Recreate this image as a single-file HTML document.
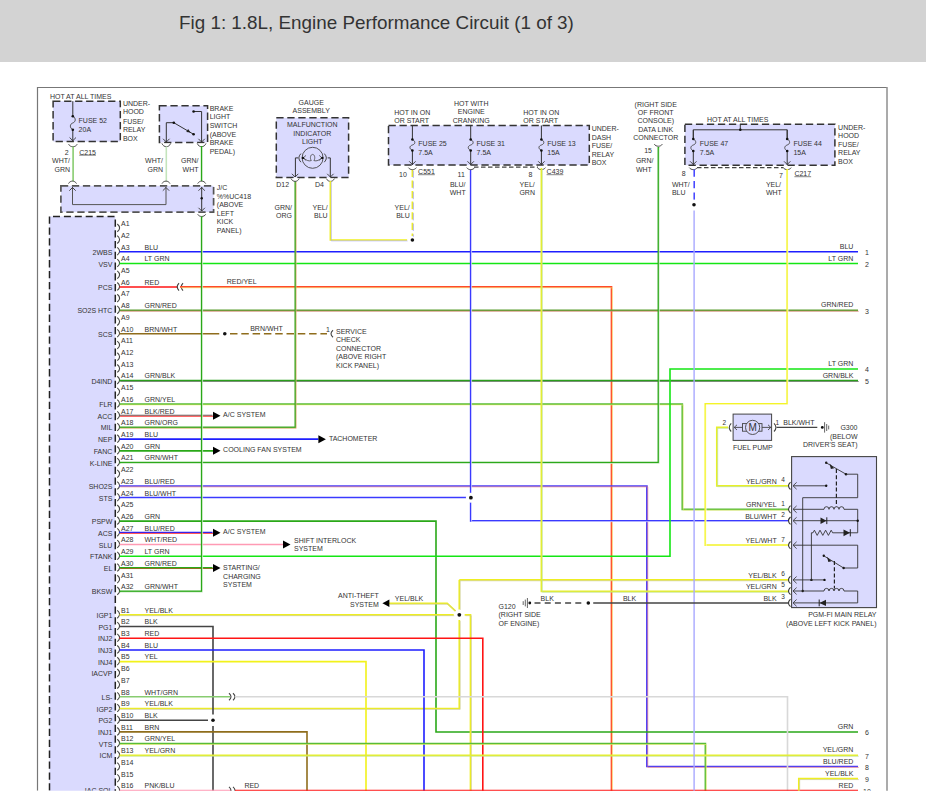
<!DOCTYPE html>
<html><head><meta charset="utf-8"><style>
html,body{margin:0;padding:0;background:#fff;width:926px;height:808px;overflow:hidden}
.hdr{position:absolute;left:0;top:0;width:926px;height:62px;background:#d3d3d3}
.ttl{position:absolute;left:179px;top:8.8px;font-family:"Liberation Sans",sans-serif;font-size:18.85px;color:#333;white-space:nowrap;line-height:28px}
svg{position:absolute;left:0;top:0}
text{font-family:"Liberation Sans",sans-serif}
</style></head><body>
<div class="hdr"></div>
<div class="ttl">Fig 1: 1.8L, Engine Performance Circuit (1 of 3)</div>
<svg width="926" height="808" viewBox="0 0 926 808">
<defs><clipPath id="cp"><rect x="0" y="0" width="926" height="790.8"/></clipPath></defs>
<g clip-path="url(#cp)">

<path d="M37.5,790.8 L37.5,87.5 L887,87.5 L887,790.8" fill="none" stroke="#777" stroke-width="1.2"/>
<line x1="887" y1="87.5" x2="887" y2="790.8" stroke="#aaa" stroke-width="1.6"/>
<text x="49.9" y="98.72" font-size="7" text-anchor="start" fill="#333">HOT AT ALL TIMES</text>
<rect x="53.1" y="101.2" width="67.2" height="40.4" fill="#dadafe" stroke="#333" stroke-width="1.5" stroke-dasharray="7.3,3.7"/>
<line x1="72.8" y1="101.2" x2="72.8" y2="116.2" stroke="#333" stroke-width="1"/>
<path d="M72.8,116.2 C76.3,118.2 75.8,121.95 72.8,122.95 C69.8,123.95 69.3,127.7 72.8,129.7" fill="none" stroke="#444" stroke-width="0.9"/>
<line x1="72.8" y1="129.7" x2="72.8" y2="141.2" stroke="#333" stroke-width="1"/>
<circle cx="72.8" cy="116.2" r="1.3" fill="#111"/>
<circle cx="72.8" cy="129.7" r="1.3" fill="#111"/>
<path d="M69.6,137.5 L72.8,140.7 L76,137.5" fill="none" stroke="#333" stroke-width="0.9"/>
<text x="78.6" y="122.72" font-size="7" text-anchor="start" fill="#333">FUSE 52</text>
<text x="78.6" y="132.22" font-size="7" text-anchor="start" fill="#333">20A</text>
<text x="122.9" y="106.12" font-size="7" text-anchor="start" fill="#333">UNDER-</text>
<text x="122.9" y="113.62" font-size="7" text-anchor="start" fill="#333">HOOD</text>
<text x="122.9" y="123.62" font-size="7" text-anchor="start" fill="#333">FUSE/</text>
<text x="122.9" y="131.82" font-size="7" text-anchor="start" fill="#333">RELAY</text>
<text x="122.9" y="141.42" font-size="7" text-anchor="start" fill="#333">BOX</text>
<path d="M68.6,144.2 C70.32,147.6 75.48,147.6 77.2,144.2" fill="#fff" stroke="#444" stroke-width="0.95"/>
<text x="68.6" y="154.62" font-size="7" text-anchor="end" fill="#333">2</text>
<text x="79.2" y="154.62" font-size="7" text-anchor="start" fill="#333">C215</text>
<line x1="79.2" y1="155.2" x2="95.94" y2="155.2" stroke="#333" stroke-width="0.6"/>
<text x="70" y="163.12" font-size="7" text-anchor="end" fill="#333">WHT/</text>
<text x="70" y="171.72" font-size="7" text-anchor="end" fill="#333">GRN</text>
<rect x="159.4" y="105.8" width="48.2" height="36.6" fill="#dadafe" stroke="#333" stroke-width="1.5" stroke-dasharray="7.3,3.7"/>
<polyline points="166.3,142 166.3,122.7 173.8,122.7" fill="none" stroke="#333" stroke-width="1" stroke-linejoin="miter" stroke-linecap="butt"/>
<polyline points="173.8,122.7 193.6,134.3" fill="none" stroke="#333" stroke-width="1" stroke-linejoin="miter" stroke-linecap="butt"/>
<path d="M190.6,132.5 L186.3,131.9 L188.1,129 Z" fill="#222"/>
<circle cx="173.8" cy="122.7" r="1.3" fill="#111"/>
<circle cx="193.6" cy="134.3" r="1.3" fill="#111"/>
<polyline points="193.6,111.5 201.6,111.5 201.6,142" fill="none" stroke="#333" stroke-width="1" stroke-linejoin="miter" stroke-linecap="butt"/>
<circle cx="193.6" cy="111.5" r="1.3" fill="#111"/>
<path d="M163.1,138.8 L166.3,142 L169.5,138.8" fill="none" stroke="#333" stroke-width="0.9"/>
<path d="M198.4,138.8 L201.6,142 L204.8,138.8" fill="none" stroke="#333" stroke-width="0.9"/>
<text x="209.7" y="110.82" font-size="7" text-anchor="start" fill="#333">BRAKE</text>
<text x="209.7" y="119.42" font-size="7" text-anchor="start" fill="#333">LIGHT</text>
<text x="209.7" y="128.02" font-size="7" text-anchor="start" fill="#333">SWITCH</text>
<text x="209.7" y="136.62" font-size="7" text-anchor="start" fill="#333">(ABOVE</text>
<text x="209.7" y="145.22" font-size="7" text-anchor="start" fill="#333">BRAKE</text>
<text x="209.7" y="153.82" font-size="7" text-anchor="start" fill="#333">PEDAL)</text>
<path d="M161.9,143.4 C163.66,147.8 168.94,147.8 170.7,143.4" fill="#fff" stroke="#444" stroke-width="0.95"/>
<path d="M197.2,143.4 C198.96,147.8 204.24,147.8 206,143.4" fill="#fff" stroke="#444" stroke-width="0.95"/>
<text x="163" y="163.12" font-size="7" text-anchor="end" fill="#333">WHT/</text>
<text x="163" y="171.72" font-size="7" text-anchor="end" fill="#333">GRN</text>
<text x="198.5" y="163.12" font-size="7" text-anchor="end" fill="#333">GRN/</text>
<text x="198.5" y="171.72" font-size="7" text-anchor="end" fill="#333">WHT</text>
<polyline points="73.1,146.5 73.1,181.2" fill="none" stroke="#88cc70" stroke-width="1.6" stroke-linejoin="miter" stroke-linecap="butt"/>
<polyline points="166.3,146.5 166.3,181.2" fill="none" stroke="#c4e4bc" stroke-width="1.6" stroke-linejoin="miter" stroke-linecap="butt"/>
<polyline points="201.7,146 201.7,181.2" fill="none" stroke="#2aa818" stroke-width="1.7000000000000002" stroke-linejoin="miter" stroke-linecap="butt"/>
<polyline points="202.6,146.9 202.6,182.1" fill="none" stroke="#ffffff" stroke-width="0.6" stroke-linejoin="miter" stroke-linecap="butt"/>
<rect x="60.9" y="185.8" width="152.7" height="26.3" fill="#dadafe" stroke="#555" stroke-width="1.7" stroke-dasharray="7.3,3.7"/>
<polyline points="72.5,187 72.5,204.6 166,204.6 166,187" fill="none" stroke="#555" stroke-width="1" stroke-linejoin="miter" stroke-linecap="butt"/>
<path d="M69.3,190.7 L72.5,187.5 L75.7,190.7" fill="none" stroke="#333" stroke-width="0.9"/>
<path d="M162.8,190.7 L166,187.5 L169.2,190.7" fill="none" stroke="#333" stroke-width="0.9"/>
<polyline points="201.7,187 201.7,211" fill="none" stroke="#333" stroke-width="1" stroke-linejoin="miter" stroke-linecap="butt"/>
<path d="M198.5,190.7 L201.7,187.5 L204.9,190.7" fill="none" stroke="#333" stroke-width="0.9"/>
<path d="M198.5,207.8 L201.7,211 L204.9,207.8" fill="none" stroke="#333" stroke-width="0.9"/>
<circle cx="201.7" cy="198.3" r="1.2" fill="#111"/>
<path d="M68.5,183.6 C70.1,180.3 74.9,180.3 76.5,183.6" fill="none" stroke="#444" stroke-width="0.95"/>
<path d="M162,183.6 C163.6,180.3 168.4,180.3 170,183.6" fill="none" stroke="#444" stroke-width="0.95"/>
<path d="M197.7,183.6 C199.3,180.3 204.1,180.3 205.7,183.6" fill="none" stroke="#444" stroke-width="0.95"/>
<path d="M197.7,214.3 C199.3,217.2 204.1,217.2 205.7,214.3" fill="#fff" stroke="#444" stroke-width="0.95"/>
<text x="216.8" y="190.32" font-size="7" text-anchor="start" fill="#333">J/C</text>
<text x="216.8" y="198.82" font-size="7" text-anchor="start" fill="#333">%%UC418</text>
<text x="216.8" y="207.32" font-size="7" text-anchor="start" fill="#333">(ABOVE</text>
<text x="216.8" y="215.82" font-size="7" text-anchor="start" fill="#333">LEFT</text>
<text x="216.8" y="224.32" font-size="7" text-anchor="start" fill="#333">KICK</text>
<text x="216.8" y="232.82" font-size="7" text-anchor="start" fill="#333">PANEL)</text>
<rect x="49.5" y="216.5" width="65.8" height="600" fill="#dadafe"/>
<path d="M49.5,216.5 L115.3,216.5" fill="none" stroke="#222" stroke-width="1.5" stroke-dasharray="7,3.9" stroke-dashoffset="7.4"/>
<path d="M49.5,216.5 L49.5,800" fill="none" stroke="#222" stroke-width="1.5" stroke-dasharray="7.3,3.6"/>
<path d="M115.3,216.5 L115.3,800" fill="none" stroke="#222" stroke-width="1.5" stroke-dasharray="7.2,3.55" stroke-dashoffset="7.65"/>
<path d="M117.3,223.98 Q121.9,227.88 117.3,231.78" fill="none" stroke="#444" stroke-width="1.1"/>
<text x="121" y="226.2" font-size="7" text-anchor="start" fill="#333">A1</text>
<path d="M117.3,235.69 Q121.9,239.59 117.3,243.49" fill="none" stroke="#444" stroke-width="1.1"/>
<text x="121" y="237.91" font-size="7" text-anchor="start" fill="#333">A2</text>
<path d="M117.3,247.4 Q121.9,251.3 117.3,255.2" fill="none" stroke="#444" stroke-width="1.1"/>
<text x="121" y="249.62" font-size="7" text-anchor="start" fill="#333">A3</text>
<text x="112.4" y="254.82" font-size="7" text-anchor="end" fill="#333">2WBS</text>
<text x="144.5" y="249.62" font-size="7" text-anchor="start" fill="#333">BLU</text>
<path d="M117.3,259.11 Q121.9,263.01 117.3,266.91" fill="none" stroke="#444" stroke-width="1.1"/>
<text x="121" y="261.33" font-size="7" text-anchor="start" fill="#333">A4</text>
<text x="112.4" y="266.53" font-size="7" text-anchor="end" fill="#333">VSV</text>
<text x="144.5" y="261.33" font-size="7" text-anchor="start" fill="#333">LT GRN</text>
<path d="M117.3,270.82 Q121.9,274.72 117.3,278.62" fill="none" stroke="#444" stroke-width="1.1"/>
<text x="121" y="273.04" font-size="7" text-anchor="start" fill="#333">A5</text>
<path d="M117.3,282.53 Q121.9,286.43 117.3,290.33" fill="none" stroke="#444" stroke-width="1.1"/>
<text x="121" y="284.75" font-size="7" text-anchor="start" fill="#333">A6</text>
<text x="112.4" y="289.95" font-size="7" text-anchor="end" fill="#333">PCS</text>
<text x="144.5" y="284.75" font-size="7" text-anchor="start" fill="#333">RED</text>
<path d="M117.3,294.24 Q121.9,298.14 117.3,302.04" fill="none" stroke="#444" stroke-width="1.1"/>
<text x="121" y="296.46" font-size="7" text-anchor="start" fill="#333">A7</text>
<path d="M117.3,305.95 Q121.9,309.85 117.3,313.75" fill="none" stroke="#444" stroke-width="1.1"/>
<text x="121" y="308.17" font-size="7" text-anchor="start" fill="#333">A8</text>
<text x="112.4" y="313.37" font-size="7" text-anchor="end" fill="#333">SO2S HTC</text>
<text x="144.5" y="308.17" font-size="7" text-anchor="start" fill="#333">GRN/RED</text>
<path d="M117.3,317.66 Q121.9,321.56 117.3,325.46" fill="none" stroke="#444" stroke-width="1.1"/>
<text x="121" y="319.88" font-size="7" text-anchor="start" fill="#333">A9</text>
<path d="M117.3,329.37 Q121.9,333.27 117.3,337.17" fill="none" stroke="#444" stroke-width="1.1"/>
<text x="121" y="331.59" font-size="7" text-anchor="start" fill="#333">A10</text>
<text x="112.4" y="336.79" font-size="7" text-anchor="end" fill="#333">SCS</text>
<text x="144.5" y="331.59" font-size="7" text-anchor="start" fill="#333">BRN/WHT</text>
<path d="M117.3,341.08 Q121.9,344.98 117.3,348.88" fill="none" stroke="#444" stroke-width="1.1"/>
<text x="121" y="343.3" font-size="7" text-anchor="start" fill="#333">A11</text>
<path d="M117.3,352.79 Q121.9,356.69 117.3,360.59" fill="none" stroke="#444" stroke-width="1.1"/>
<text x="121" y="355.01" font-size="7" text-anchor="start" fill="#333">A12</text>
<path d="M117.3,364.5 Q121.9,368.4 117.3,372.3" fill="none" stroke="#444" stroke-width="1.1"/>
<text x="121" y="366.72" font-size="7" text-anchor="start" fill="#333">A13</text>
<path d="M117.3,376.21 Q121.9,380.11 117.3,384.01" fill="none" stroke="#444" stroke-width="1.1"/>
<text x="121" y="378.43" font-size="7" text-anchor="start" fill="#333">A14</text>
<text x="112.4" y="383.63" font-size="7" text-anchor="end" fill="#333">D4IND</text>
<text x="144.5" y="378.43" font-size="7" text-anchor="start" fill="#333">GRN/BLK</text>
<path d="M117.3,387.92 Q121.9,391.82 117.3,395.72" fill="none" stroke="#444" stroke-width="1.1"/>
<text x="121" y="390.14" font-size="7" text-anchor="start" fill="#333">A15</text>
<path d="M117.3,399.63 Q121.9,403.53 117.3,407.43" fill="none" stroke="#444" stroke-width="1.1"/>
<text x="121" y="401.85" font-size="7" text-anchor="start" fill="#333">A16</text>
<text x="112.4" y="407.05" font-size="7" text-anchor="end" fill="#333">FLR</text>
<text x="144.5" y="401.85" font-size="7" text-anchor="start" fill="#333">GRN/YEL</text>
<path d="M117.3,411.34 Q121.9,415.24 117.3,419.14" fill="none" stroke="#444" stroke-width="1.1"/>
<text x="121" y="413.56" font-size="7" text-anchor="start" fill="#333">A17</text>
<text x="112.4" y="418.76" font-size="7" text-anchor="end" fill="#333">ACC</text>
<text x="144.5" y="413.56" font-size="7" text-anchor="start" fill="#333">BLK/RED</text>
<path d="M117.3,423.05 Q121.9,426.95 117.3,430.85" fill="none" stroke="#444" stroke-width="1.1"/>
<text x="121" y="425.27" font-size="7" text-anchor="start" fill="#333">A18</text>
<text x="112.4" y="430.47" font-size="7" text-anchor="end" fill="#333">MIL</text>
<text x="144.5" y="425.27" font-size="7" text-anchor="start" fill="#333">GRN/ORG</text>
<path d="M117.3,434.76 Q121.9,438.66 117.3,442.56" fill="none" stroke="#444" stroke-width="1.1"/>
<text x="121" y="436.98" font-size="7" text-anchor="start" fill="#333">A19</text>
<text x="112.4" y="442.18" font-size="7" text-anchor="end" fill="#333">NEP</text>
<text x="144.5" y="436.98" font-size="7" text-anchor="start" fill="#333">BLU</text>
<path d="M117.3,446.47 Q121.9,450.37 117.3,454.27" fill="none" stroke="#444" stroke-width="1.1"/>
<text x="121" y="448.69" font-size="7" text-anchor="start" fill="#333">A20</text>
<text x="112.4" y="453.89" font-size="7" text-anchor="end" fill="#333">FANC</text>
<text x="144.5" y="448.69" font-size="7" text-anchor="start" fill="#333">GRN</text>
<path d="M117.3,458.18 Q121.9,462.08 117.3,465.98" fill="none" stroke="#444" stroke-width="1.1"/>
<text x="121" y="460.4" font-size="7" text-anchor="start" fill="#333">A21</text>
<text x="112.4" y="465.6" font-size="7" text-anchor="end" fill="#333">K-LINE</text>
<text x="144.5" y="460.4" font-size="7" text-anchor="start" fill="#333">GRN/WHT</text>
<path d="M117.3,469.89 Q121.9,473.79 117.3,477.69" fill="none" stroke="#444" stroke-width="1.1"/>
<text x="121" y="472.11" font-size="7" text-anchor="start" fill="#333">A22</text>
<path d="M117.3,481.6 Q121.9,485.5 117.3,489.4" fill="none" stroke="#444" stroke-width="1.1"/>
<text x="121" y="483.82" font-size="7" text-anchor="start" fill="#333">A23</text>
<text x="112.4" y="489.02" font-size="7" text-anchor="end" fill="#333">SHO2S</text>
<text x="144.5" y="483.82" font-size="7" text-anchor="start" fill="#333">BLU/RED</text>
<path d="M117.3,493.31 Q121.9,497.21 117.3,501.11" fill="none" stroke="#444" stroke-width="1.1"/>
<text x="121" y="495.53" font-size="7" text-anchor="start" fill="#333">A24</text>
<text x="112.4" y="500.73" font-size="7" text-anchor="end" fill="#333">STS</text>
<text x="144.5" y="495.53" font-size="7" text-anchor="start" fill="#333">BLU/WHT</text>
<path d="M117.3,505.02 Q121.9,508.92 117.3,512.82" fill="none" stroke="#444" stroke-width="1.1"/>
<text x="121" y="507.24" font-size="7" text-anchor="start" fill="#333">A25</text>
<path d="M117.3,516.73 Q121.9,520.63 117.3,524.53" fill="none" stroke="#444" stroke-width="1.1"/>
<text x="121" y="518.95" font-size="7" text-anchor="start" fill="#333">A26</text>
<text x="112.4" y="524.15" font-size="7" text-anchor="end" fill="#333">PSPW</text>
<text x="144.5" y="518.95" font-size="7" text-anchor="start" fill="#333">GRN</text>
<path d="M117.3,528.44 Q121.9,532.34 117.3,536.24" fill="none" stroke="#444" stroke-width="1.1"/>
<text x="121" y="530.66" font-size="7" text-anchor="start" fill="#333">A27</text>
<text x="112.4" y="535.86" font-size="7" text-anchor="end" fill="#333">ACS</text>
<text x="144.5" y="530.66" font-size="7" text-anchor="start" fill="#333">BLU/RED</text>
<path d="M117.3,540.15 Q121.9,544.05 117.3,547.95" fill="none" stroke="#444" stroke-width="1.1"/>
<text x="121" y="542.37" font-size="7" text-anchor="start" fill="#333">A28</text>
<text x="112.4" y="547.57" font-size="7" text-anchor="end" fill="#333">SLU</text>
<text x="144.5" y="542.37" font-size="7" text-anchor="start" fill="#333">WHT/RED</text>
<path d="M117.3,551.86 Q121.9,555.76 117.3,559.66" fill="none" stroke="#444" stroke-width="1.1"/>
<text x="121" y="554.08" font-size="7" text-anchor="start" fill="#333">A29</text>
<text x="112.4" y="559.28" font-size="7" text-anchor="end" fill="#333">FTANK</text>
<text x="144.5" y="554.08" font-size="7" text-anchor="start" fill="#333">LT GRN</text>
<path d="M117.3,563.57 Q121.9,567.47 117.3,571.37" fill="none" stroke="#444" stroke-width="1.1"/>
<text x="121" y="565.79" font-size="7" text-anchor="start" fill="#333">A30</text>
<text x="112.4" y="570.99" font-size="7" text-anchor="end" fill="#333">EL</text>
<text x="144.5" y="565.79" font-size="7" text-anchor="start" fill="#333">GRN/RED</text>
<path d="M117.3,575.28 Q121.9,579.18 117.3,583.08" fill="none" stroke="#444" stroke-width="1.1"/>
<text x="121" y="577.5" font-size="7" text-anchor="start" fill="#333">A31</text>
<path d="M117.3,586.99 Q121.9,590.89 117.3,594.79" fill="none" stroke="#444" stroke-width="1.1"/>
<text x="121" y="589.21" font-size="7" text-anchor="start" fill="#333">A32</text>
<text x="112.4" y="594.41" font-size="7" text-anchor="end" fill="#333">BKSW</text>
<text x="144.5" y="589.21" font-size="7" text-anchor="start" fill="#333">GRN/WHT</text>
<path d="M117.3,610.41 Q121.9,614.31 117.3,618.21" fill="none" stroke="#444" stroke-width="1.1"/>
<text x="121" y="612.63" font-size="7" text-anchor="start" fill="#333">B1</text>
<text x="112.4" y="617.83" font-size="7" text-anchor="end" fill="#333">IGP1</text>
<text x="144.5" y="612.63" font-size="7" text-anchor="start" fill="#333">YEL/BLK</text>
<path d="M117.3,622.12 Q121.9,626.02 117.3,629.92" fill="none" stroke="#444" stroke-width="1.1"/>
<text x="121" y="624.34" font-size="7" text-anchor="start" fill="#333">B2</text>
<text x="112.4" y="629.54" font-size="7" text-anchor="end" fill="#333">PG1</text>
<text x="144.5" y="624.34" font-size="7" text-anchor="start" fill="#333">BLK</text>
<path d="M117.3,633.83 Q121.9,637.73 117.3,641.63" fill="none" stroke="#444" stroke-width="1.1"/>
<text x="121" y="636.05" font-size="7" text-anchor="start" fill="#333">B3</text>
<text x="112.4" y="641.25" font-size="7" text-anchor="end" fill="#333">INJ2</text>
<text x="144.5" y="636.05" font-size="7" text-anchor="start" fill="#333">RED</text>
<path d="M117.3,645.54 Q121.9,649.44 117.3,653.34" fill="none" stroke="#444" stroke-width="1.1"/>
<text x="121" y="647.76" font-size="7" text-anchor="start" fill="#333">B4</text>
<text x="112.4" y="652.96" font-size="7" text-anchor="end" fill="#333">INJ3</text>
<text x="144.5" y="647.76" font-size="7" text-anchor="start" fill="#333">BLU</text>
<path d="M117.3,657.25 Q121.9,661.15 117.3,665.05" fill="none" stroke="#444" stroke-width="1.1"/>
<text x="121" y="659.47" font-size="7" text-anchor="start" fill="#333">B5</text>
<text x="112.4" y="664.67" font-size="7" text-anchor="end" fill="#333">INJ4</text>
<text x="144.5" y="659.47" font-size="7" text-anchor="start" fill="#333">YEL</text>
<path d="M117.3,668.96 Q121.9,672.86 117.3,676.76" fill="none" stroke="#444" stroke-width="1.1"/>
<text x="121" y="671.18" font-size="7" text-anchor="start" fill="#333">B6</text>
<text x="112.4" y="676.38" font-size="7" text-anchor="end" fill="#333">IACVP</text>
<path d="M117.3,680.67 Q121.9,684.57 117.3,688.47" fill="none" stroke="#444" stroke-width="1.1"/>
<text x="121" y="682.89" font-size="7" text-anchor="start" fill="#333">B7</text>
<path d="M117.3,692.38 Q121.9,696.28 117.3,700.18" fill="none" stroke="#444" stroke-width="1.1"/>
<text x="121" y="694.6" font-size="7" text-anchor="start" fill="#333">B8</text>
<text x="112.4" y="699.8" font-size="7" text-anchor="end" fill="#333">LS-</text>
<text x="144.5" y="694.6" font-size="7" text-anchor="start" fill="#333">WHT/GRN</text>
<path d="M117.3,704.09 Q121.9,707.99 117.3,711.89" fill="none" stroke="#444" stroke-width="1.1"/>
<text x="121" y="706.31" font-size="7" text-anchor="start" fill="#333">B9</text>
<text x="112.4" y="711.51" font-size="7" text-anchor="end" fill="#333">IGP2</text>
<text x="144.5" y="706.31" font-size="7" text-anchor="start" fill="#333">YEL/BLK</text>
<path d="M117.3,715.8 Q121.9,719.7 117.3,723.6" fill="none" stroke="#444" stroke-width="1.1"/>
<text x="121" y="718.02" font-size="7" text-anchor="start" fill="#333">B10</text>
<text x="112.4" y="723.22" font-size="7" text-anchor="end" fill="#333">PG2</text>
<text x="144.5" y="718.02" font-size="7" text-anchor="start" fill="#333">BLK</text>
<path d="M117.3,727.51 Q121.9,731.41 117.3,735.31" fill="none" stroke="#444" stroke-width="1.1"/>
<text x="121" y="729.73" font-size="7" text-anchor="start" fill="#333">B11</text>
<text x="112.4" y="734.93" font-size="7" text-anchor="end" fill="#333">INJ1</text>
<text x="144.5" y="729.73" font-size="7" text-anchor="start" fill="#333">BRN</text>
<path d="M117.3,739.22 Q121.9,743.12 117.3,747.02" fill="none" stroke="#444" stroke-width="1.1"/>
<text x="121" y="741.44" font-size="7" text-anchor="start" fill="#333">B12</text>
<text x="112.4" y="746.64" font-size="7" text-anchor="end" fill="#333">VTS</text>
<text x="144.5" y="741.44" font-size="7" text-anchor="start" fill="#333">GRN/YEL</text>
<path d="M117.3,750.93 Q121.9,754.83 117.3,758.73" fill="none" stroke="#444" stroke-width="1.1"/>
<text x="121" y="753.15" font-size="7" text-anchor="start" fill="#333">B13</text>
<text x="112.4" y="758.35" font-size="7" text-anchor="end" fill="#333">ICM</text>
<text x="144.5" y="753.15" font-size="7" text-anchor="start" fill="#333">YEL/GRN</text>
<path d="M117.3,762.64 Q121.9,766.54 117.3,770.44" fill="none" stroke="#444" stroke-width="1.1"/>
<text x="121" y="764.86" font-size="7" text-anchor="start" fill="#333">B14</text>
<path d="M117.3,774.35 Q121.9,778.25 117.3,782.15" fill="none" stroke="#444" stroke-width="1.1"/>
<text x="121" y="776.57" font-size="7" text-anchor="start" fill="#333">B15</text>
<path d="M117.3,786.06 Q121.9,789.96 117.3,793.86" fill="none" stroke="#444" stroke-width="1.1"/>
<text x="121" y="788.28" font-size="7" text-anchor="start" fill="#333">B16</text>
<text x="112.4" y="793.48" font-size="7" text-anchor="end" fill="#333">IAC SOL</text>
<text x="144.5" y="788.28" font-size="7" text-anchor="start" fill="#333">PNK/BLU</text>
<polyline points="119.5,251.8 858,251.8" fill="none" stroke="#1e1eff" stroke-width="1.6" stroke-linejoin="miter" stroke-linecap="butt"/>
<polyline points="119.5,263.51 858,263.51" fill="none" stroke="#14e614" stroke-width="1.6" stroke-linejoin="miter" stroke-linecap="butt"/>
<polyline points="119.5,286.93 177.5,286.93" fill="none" stroke="#ff1414" stroke-width="1.6" stroke-linejoin="miter" stroke-linecap="butt"/>
<path d="M179,283.23 Q175.5,286.93 179,290.63 M183,283.23 Q179.5,286.93 183,290.63" fill="none" stroke="#444" stroke-width="1.1"/>
<polyline points="180,286.93 611.5,286.93 611.5,800" fill="none" stroke="#ff4a2a" stroke-width="1.7000000000000002" stroke-linejoin="miter" stroke-linecap="butt"/>
<polyline points="180.9,287.83 612.4,287.83 612.4,800.9" fill="none" stroke="#f4f070" stroke-width="0.6" stroke-linejoin="miter" stroke-linecap="butt"/>
<text x="226.7" y="283.95" font-size="7" text-anchor="start" fill="#333">RED/YEL</text>
<polyline points="119.5,310.35 858,310.35" fill="none" stroke="#5a9e30" stroke-width="1.7000000000000002" stroke-linejoin="miter" stroke-linecap="butt"/>
<polyline points="120.4,311.25 858.9,311.25" fill="none" stroke="#f07878" stroke-width="0.6" stroke-linejoin="miter" stroke-linecap="butt"/>
<polyline points="119.5,333.77 219.3,333.77" fill="none" stroke="#8f6d1c" stroke-width="1.6" stroke-linejoin="miter" stroke-linecap="butt"/>
<circle cx="224.8" cy="333.77" r="5" fill="#fff"/>
<circle cx="224.8" cy="333.77" r="1.8" fill="#111"/>
<polyline points="230,333.77 327,333.77" fill="none" stroke="#8f6d1c" stroke-width="1.6" stroke-linejoin="miter" stroke-linecap="butt" stroke-dasharray="7.5,3.8"/>
<text x="250.2" y="330.79" font-size="7" text-anchor="start" fill="#333">BRN/WHT</text>
<text x="326" y="332.09" font-size="7" text-anchor="start" fill="#333">1</text>
<path d="M333,330.27 Q329,333.77 333,337.27" fill="none" stroke="#444" stroke-width="1.1"/>
<text x="336" y="334.12" font-size="7" text-anchor="start" fill="#333">SERVICE</text>
<text x="336" y="342.12" font-size="7" text-anchor="start" fill="#333">CHECK</text>
<text x="336" y="350.92" font-size="7" text-anchor="start" fill="#333">CONNECTOR</text>
<text x="336" y="359.12" font-size="7" text-anchor="start" fill="#333">(ABOVE RIGHT</text>
<text x="336" y="368.02" font-size="7" text-anchor="start" fill="#333">KICK PANEL)</text>
<polyline points="119.5,380.61 858,380.61" fill="none" stroke="#2a9e1c" stroke-width="1.7000000000000002" stroke-linejoin="miter" stroke-linecap="butt"/>
<polyline points="120.4,381.51 858.9,381.51" fill="none" stroke="#666666" stroke-width="0.6" stroke-linejoin="miter" stroke-linecap="butt"/>
<polyline points="119.5,404.03 682.3,404.03 682.3,509.3 788,509.3" fill="none" stroke="#58bc38" stroke-width="1.7000000000000002" stroke-linejoin="miter" stroke-linecap="butt"/>
<polyline points="120.4,404.93 683.2,404.93 683.2,510.2 788.9,510.2" fill="none" stroke="#f4f070" stroke-width="0.6" stroke-linejoin="miter" stroke-linecap="butt"/>
<polyline points="119.05,415.29 212.55,415.29" fill="none" stroke="#555555" stroke-width="1.1" stroke-linejoin="miter" stroke-linecap="butt"/>
<polyline points="120.05,416.29 213.55,416.29" fill="none" stroke="#ff4040" stroke-width="1.0" stroke-linejoin="miter" stroke-linecap="butt"/>
<path d="M213,411.74 L220.5,415.74 L213,419.74 Z" fill="#000"/>
<text x="223.1" y="416.96" font-size="7" text-anchor="start" fill="#333">A/C SYSTEM</text>
<polyline points="119.5,427.45 295.3,427.45 295.3,181" fill="none" stroke="#40aa28" stroke-width="1.7000000000000002" stroke-linejoin="miter" stroke-linecap="butt"/>
<polyline points="120.4,428.35 296.2,428.35 296.2,181.9" fill="none" stroke="#ffb080" stroke-width="0.6" stroke-linejoin="miter" stroke-linecap="butt"/>
<polyline points="119.5,439.16 318.4,439.16" fill="none" stroke="#1e1eff" stroke-width="1.6" stroke-linejoin="miter" stroke-linecap="butt"/>
<path d="M318.4,435.16 L325.9,439.16 L318.4,443.16 Z" fill="#000"/>
<text x="328.9" y="441.08" font-size="7" text-anchor="start" fill="#333">TACHOMETER</text>
<polyline points="119.5,450.87 213,450.87" fill="none" stroke="#2aa818" stroke-width="1.6" stroke-linejoin="miter" stroke-linecap="butt"/>
<path d="M213,446.87 L220.5,450.87 L213,454.87 Z" fill="#000"/>
<text x="223.1" y="451.79" font-size="7" text-anchor="start" fill="#333">COOLING FAN SYSTEM</text>
<polyline points="119.5,462.58 658.4,462.58 658.4,147" fill="none" stroke="#2aa818" stroke-width="1.7000000000000002" stroke-linejoin="miter" stroke-linecap="butt"/>
<polyline points="120.4,463.48 659.3,463.48 659.3,147.9" fill="none" stroke="#ffffff" stroke-width="0.6" stroke-linejoin="miter" stroke-linecap="butt"/>
<polyline points="119.5,486 646.9,486 646.9,766.5 858,766.5" fill="none" stroke="#4a3cf6" stroke-width="1.7000000000000002" stroke-linejoin="miter" stroke-linecap="butt"/>
<polyline points="120.4,486.9 647.8,486.9 647.8,767.4 858.9,767.4" fill="none" stroke="#f07878" stroke-width="0.6" stroke-linejoin="miter" stroke-linecap="butt"/>
<polyline points="470.7,168 470.7,520.8 788,520.8" fill="none" stroke="#3a3aff" stroke-width="1.7000000000000002" stroke-linejoin="miter" stroke-linecap="butt"/>
<polyline points="471.6,168.9 471.6,521.7 788.9,521.7" fill="none" stroke="#ffffff" stroke-width="0.6" stroke-linejoin="miter" stroke-linecap="butt"/>
<polyline points="119.5,497.71 470.7,497.71" fill="none" stroke="#3a3aff" stroke-width="1.7000000000000002" stroke-linejoin="miter" stroke-linecap="butt"/>
<polyline points="120.4,498.61 471.6,498.61" fill="none" stroke="#ffffff" stroke-width="0.6" stroke-linejoin="miter" stroke-linecap="butt"/>
<circle cx="470.9" cy="497.71" r="5" fill="#fff"/>
<circle cx="470.9" cy="497.71" r="1.9" fill="#111"/>
<polyline points="119.5,521.13 436,521.13 436,732 858,732" fill="none" stroke="#2aa818" stroke-width="1.6" stroke-linejoin="miter" stroke-linecap="butt"/>
<polyline points="119.05,532.39 212.55,532.39" fill="none" stroke="#1e1eff" stroke-width="1.1" stroke-linejoin="miter" stroke-linecap="butt"/>
<polyline points="120.05,533.39 213.55,533.39" fill="none" stroke="#ff4040" stroke-width="1.0" stroke-linejoin="miter" stroke-linecap="butt"/>
<path d="M213,528.84 L220.5,532.84 L213,536.84 Z" fill="#000"/>
<text x="223.1" y="534.06" font-size="7" text-anchor="start" fill="#333">A/C SYSTEM</text>
<polyline points="119.5,544.55 283,544.55" fill="none" stroke="#ff9ab4" stroke-width="1.6" stroke-linejoin="miter" stroke-linecap="butt"/>
<path d="M283,540.55 L290.5,544.55 L283,548.55 Z" fill="#000"/>
<text x="294" y="542.87" font-size="7" text-anchor="start" fill="#333">SHIFT INTERLOCK</text>
<text x="294" y="551.27" font-size="7" text-anchor="start" fill="#333">SYSTEM</text>
<polyline points="119.5,556.26 670,556.26 670,369 858,369" fill="none" stroke="#14e614" stroke-width="1.6" stroke-linejoin="miter" stroke-linecap="butt"/>
<polyline points="119.05,567.52 212.55,567.52" fill="none" stroke="#2aa818" stroke-width="1.1" stroke-linejoin="miter" stroke-linecap="butt"/>
<polyline points="120.05,568.52 213.55,568.52" fill="none" stroke="#8f6d1c" stroke-width="1.0" stroke-linejoin="miter" stroke-linecap="butt"/>
<path d="M213,563.97 L220.5,567.97 L213,571.97 Z" fill="#000"/>
<text x="223.1" y="570.09" font-size="7" text-anchor="start" fill="#333">STARTING/</text>
<text x="223.1" y="578.69" font-size="7" text-anchor="start" fill="#333">CHARGING</text>
<text x="223.1" y="587.29" font-size="7" text-anchor="start" fill="#333">SYSTEM</text>
<polyline points="119.5,591.39 201.7,591.39 201.7,216.6" fill="none" stroke="#2aa818" stroke-width="1.7000000000000002" stroke-linejoin="miter" stroke-linecap="butt"/>
<polyline points="120.4,592.29 202.6,592.29 202.6,217.5" fill="none" stroke="#ffffff" stroke-width="0.6" stroke-linejoin="miter" stroke-linecap="butt"/>
<polyline points="119.5,614.81 453.7,614.81" fill="none" stroke="#eeee22" stroke-width="1.7000000000000002" stroke-linejoin="miter" stroke-linecap="butt"/>
<polyline points="120.4,615.71 454.6,615.71" fill="none" stroke="#c4c49c" stroke-width="0.6" stroke-linejoin="miter" stroke-linecap="butt"/>
<polyline points="459.3,579.9 459.3,609.6" fill="none" stroke="#eeee22" stroke-width="1.7000000000000002" stroke-linejoin="miter" stroke-linecap="butt"/>
<polyline points="460.2,580.8 460.2,610.5" fill="none" stroke="#c4c49c" stroke-width="0.6" stroke-linejoin="miter" stroke-linecap="butt"/>
<polyline points="459.3,579.9 788,579.9" fill="none" stroke="#eeee22" stroke-width="1.7000000000000002" stroke-linejoin="miter" stroke-linecap="butt"/>
<polyline points="460.2,580.8 788.9,580.8" fill="none" stroke="#c4c49c" stroke-width="0.6" stroke-linejoin="miter" stroke-linecap="butt"/>
<polyline points="459.3,620 459.3,708.49 119.5,708.49" fill="none" stroke="#eeee22" stroke-width="1.7000000000000002" stroke-linejoin="miter" stroke-linecap="butt"/>
<polyline points="460.2,620.9 460.2,709.39 120.4,709.39" fill="none" stroke="#c4c49c" stroke-width="0.6" stroke-linejoin="miter" stroke-linecap="butt"/>
<polyline points="464.6,614.81 470.5,614.81 470.5,800" fill="none" stroke="#eeee22" stroke-width="1.7000000000000002" stroke-linejoin="miter" stroke-linecap="butt"/>
<polyline points="465.5,615.71 471.4,615.71 471.4,800.9" fill="none" stroke="#c4c49c" stroke-width="0.6" stroke-linejoin="miter" stroke-linecap="butt"/>
<polyline points="389,603.3 447.2,603.3 455.6,611.1" fill="none" stroke="#eeee22" stroke-width="1.7000000000000002" stroke-linejoin="miter" stroke-linecap="butt"/>
<polyline points="389.9,604.2 448.1,604.2 456.5,612" fill="none" stroke="#c4c49c" stroke-width="0.6" stroke-linejoin="miter" stroke-linecap="butt"/>
<circle cx="459.3" cy="614.81" r="5" fill="#fff"/>
<circle cx="459.3" cy="614.81" r="1.9" fill="#111"/>
<path d="M389.4,599.5 L382.4,603.3 L389.4,607.1 Z" fill="#000"/>
<text x="378.8" y="597.62" font-size="7" text-anchor="end" fill="#333">ANTI-THEFT</text>
<text x="378.8" y="606.72" font-size="7" text-anchor="end" fill="#333">SYSTEM</text>
<text x="394.8" y="600.62" font-size="7" text-anchor="start" fill="#333">YEL/BLK</text>
<polyline points="119.5,626.52 213,626.52 213,714.5" fill="none" stroke="#444444" stroke-width="1.6" stroke-linejoin="miter" stroke-linecap="butt"/>
<polyline points="213,726 213,800" fill="none" stroke="#444444" stroke-width="1.6" stroke-linejoin="miter" stroke-linecap="butt"/>
<polyline points="119.5,720.2 208,720.2" fill="none" stroke="#444444" stroke-width="1.6" stroke-linejoin="miter" stroke-linecap="butt"/>
<circle cx="213" cy="720.2" r="5" fill="#fff"/>
<circle cx="213" cy="720.2" r="1.8" fill="#111"/>
<polyline points="119.5,638.23 482.8,638.23 482.8,800" fill="none" stroke="#ff1414" stroke-width="1.6" stroke-linejoin="miter" stroke-linecap="butt"/>
<polyline points="119.5,649.94 424,649.94 424,800" fill="none" stroke="#1e1eff" stroke-width="1.6" stroke-linejoin="miter" stroke-linecap="butt"/>
<polyline points="119.5,661.65 366,661.65 366,800" fill="none" stroke="#f2f21a" stroke-width="1.6" stroke-linejoin="miter" stroke-linecap="butt"/>
<polyline points="119.5,696.78 230,696.78" fill="none" stroke="#88cc70" stroke-width="1.6" stroke-linejoin="miter" stroke-linecap="butt"/>
<path d="M229,693.28 Q233,696.78 229,700.28 M233,693.28 Q237,696.78 233,700.28" fill="none" stroke="#444" stroke-width="1.1"/>
<polyline points="235,696.78 787.5,696.78 787.5,800" fill="none" stroke="#d8d8d8" stroke-width="1.6" stroke-linejoin="miter" stroke-linecap="butt"/>
<polyline points="119.5,731.91 307,731.91 307,800" fill="none" stroke="#8f6d1c" stroke-width="1.6" stroke-linejoin="miter" stroke-linecap="butt"/>
<polyline points="119.5,743.62 705.4,743.62 705.4,800" fill="none" stroke="#58bc38" stroke-width="1.7000000000000002" stroke-linejoin="miter" stroke-linecap="butt"/>
<polyline points="120.4,744.52 706.3,744.52 706.3,800.9" fill="none" stroke="#f4f070" stroke-width="0.6" stroke-linejoin="miter" stroke-linecap="butt"/>
<polyline points="119.5,755.33 858,755.33" fill="none" stroke="#e8f028" stroke-width="1.7000000000000002" stroke-linejoin="miter" stroke-linecap="butt"/>
<polyline points="120.4,756.23 858.9,756.23" fill="none" stroke="#b4dca0" stroke-width="0.6" stroke-linejoin="miter" stroke-linecap="butt"/>
<polyline points="119.5,790.46 231,790.46" fill="none" stroke="#ff9ab4" stroke-width="1.6" stroke-linejoin="miter" stroke-linecap="butt"/>
<path d="M229,786.96 Q233,790.46 229,793.96 M233,786.96 Q237,790.46 233,793.96" fill="none" stroke="#444" stroke-width="1.1"/>
<polyline points="235,790.46 858,790.46" fill="none" stroke="#ff1414" stroke-width="1.6" stroke-linejoin="miter" stroke-linecap="butt"/>
<text x="244.4" y="787.82" font-size="7" text-anchor="start" fill="#333">RED</text>
<text x="311.2" y="104.82" font-size="7" text-anchor="middle" fill="#333">GAUGE</text>
<text x="311.2" y="113.02" font-size="7" text-anchor="middle" fill="#333">ASSEMBLY</text>
<rect x="276.3" y="117.8" width="72.3" height="59.7" fill="#dadafe" stroke="#333" stroke-width="1.5" stroke-dasharray="7.3,3.7"/>
<text x="312.3" y="127.02" font-size="7" text-anchor="middle" fill="#333">MALFUNCTION</text>
<text x="312.3" y="135.62" font-size="7" text-anchor="middle" fill="#333">INDICATOR</text>
<text x="312.3" y="144.22" font-size="7" text-anchor="middle" fill="#333">LIGHT</text>
<circle cx="312.6" cy="157.8" r="10.5" fill="none" stroke="#444" stroke-width="0.9"/>
<polyline points="295.4,177 295.4,157.9 298.2,157.9" fill="none" stroke="#333" stroke-width="1" stroke-linejoin="miter" stroke-linecap="butt"/>
<polyline points="330.3,177 330.3,157.9 327.7,157.9" fill="none" stroke="#333" stroke-width="1" stroke-linejoin="miter" stroke-linecap="butt"/>
<path d="M300.9,153.6 Q296.8,157.9 300.9,162.2 M324.3,153.6 Q328.4,157.9 324.3,162.2" fill="none" stroke="#444" stroke-width="1"/>
<path d="M306,155.4 L303.3,157.9 L306,160.4 M319.2,155.4 L321.9,157.9 L319.2,160.4" fill="none" stroke="#444" stroke-width="0.8"/>
<path d="M303.5,158 C306,160 308.5,161.6 311.3,160.6 C309.6,158 310.6,154.4 312.6,154.4 C314.6,154.4 315.6,158 313.9,160.6 C316.7,161.6 319.2,160 321.7,158" fill="none" stroke="#444" stroke-width="0.8"/>
<circle cx="302.9" cy="157.9" r="1.2" fill="#111"/>
<circle cx="322.3" cy="157.9" r="1.2" fill="#111"/>
<path d="M291.9,173.8 L295.1,177 L298.3,173.8" fill="none" stroke="#333" stroke-width="0.9"/>
<path d="M327.2,173.8 L330.4,177 L333.6,173.8" fill="none" stroke="#333" stroke-width="0.9"/>
<path d="M291.1,178.6 C292.7,182.3 297.5,182.3 299.1,178.6" fill="#fff" stroke="#444" stroke-width="0.95"/>
<path d="M326.4,178.6 C328,182.3 332.8,182.3 334.4,178.6" fill="#fff" stroke="#444" stroke-width="0.95"/>
<text x="276.2" y="186.82" font-size="7" text-anchor="start" fill="#333">D12</text>
<text x="315" y="186.82" font-size="7" text-anchor="start" fill="#333">D4</text>
<text x="292" y="209.72" font-size="7" text-anchor="end" fill="#333">GRN/</text>
<text x="292" y="217.52" font-size="7" text-anchor="end" fill="#333">ORG</text>
<polyline points="330.4,181 330.4,240 407.3,240" fill="none" stroke="#f0f020" stroke-width="1.7000000000000002" stroke-linejoin="miter" stroke-linecap="butt"/>
<polyline points="331.3,181.9 331.3,240.9 408.2,240.9" fill="none" stroke="#a0a0ff" stroke-width="0.6" stroke-linejoin="miter" stroke-linecap="butt"/>
<text x="327.7" y="209.72" font-size="7" text-anchor="end" fill="#333">YEL/</text>
<text x="327.7" y="217.52" font-size="7" text-anchor="end" fill="#333">BLU</text>
<circle cx="412.4" cy="240" r="5" fill="#fff"/>
<circle cx="412.4" cy="240" r="1.8" fill="#111"/>
<polyline points="412.4,169.8 412.4,236" fill="none" stroke="#f0f020" stroke-width="1.7000000000000002" stroke-linejoin="miter" stroke-linecap="butt" stroke-dasharray="7.3,3.3"/>
<polyline points="413.3,170.7 413.3,236.9" fill="none" stroke="#8080ff" stroke-width="0.6" stroke-linejoin="miter" stroke-linecap="butt" stroke-dasharray="7.3,3.3"/>
<text x="409.8" y="209.72" font-size="7" text-anchor="end" fill="#333">YEL/</text>
<text x="409.8" y="217.52" font-size="7" text-anchor="end" fill="#333">BLU</text>
<text x="394.2" y="115.02" font-size="7" text-anchor="start" fill="#333">HOT IN ON</text>
<text x="394.2" y="122.82" font-size="7" text-anchor="start" fill="#333">OR START</text>
<text x="471.2" y="105.52" font-size="7" text-anchor="middle" fill="#333">HOT WITH</text>
<text x="471.2" y="114.17" font-size="7" text-anchor="middle" fill="#333">ENGINE</text>
<text x="471.2" y="122.82" font-size="7" text-anchor="middle" fill="#333">CRANKING</text>
<text x="523.3" y="115.02" font-size="7" text-anchor="start" fill="#333">HOT IN ON</text>
<text x="523.3" y="122.82" font-size="7" text-anchor="start" fill="#333">OR START</text>
<rect x="388.5" y="125.5" width="200.8" height="39.6" fill="#dadafe" stroke="#333" stroke-width="1.5" stroke-dasharray="7.3,3.7"/>
<line x1="412.4" y1="125.5" x2="412.4" y2="139.5" stroke="#333" stroke-width="1"/>
<path d="M412.4,139.5 C415.9,141.5 415.4,144 412.4,145 C409.4,146 408.9,148.5 412.4,150.5" fill="none" stroke="#444" stroke-width="0.9"/>
<line x1="412.4" y1="150.5" x2="412.4" y2="165" stroke="#333" stroke-width="1"/>
<circle cx="412.4" cy="139.5" r="1.3" fill="#111"/>
<circle cx="412.4" cy="150.5" r="1.3" fill="#111"/>
<path d="M409.2,161.3 L412.4,164.5 L415.6,161.3" fill="none" stroke="#333" stroke-width="0.9"/>
<line x1="470.7" y1="125.5" x2="470.7" y2="139.5" stroke="#333" stroke-width="1"/>
<path d="M470.7,139.5 C474.2,141.5 473.7,144 470.7,145 C467.7,146 467.2,148.5 470.7,150.5" fill="none" stroke="#444" stroke-width="0.9"/>
<line x1="470.7" y1="150.5" x2="470.7" y2="165" stroke="#333" stroke-width="1"/>
<circle cx="470.7" cy="139.5" r="1.3" fill="#111"/>
<circle cx="470.7" cy="150.5" r="1.3" fill="#111"/>
<path d="M467.5,161.3 L470.7,164.5 L473.9,161.3" fill="none" stroke="#333" stroke-width="0.9"/>
<line x1="541.4" y1="125.5" x2="541.4" y2="139.5" stroke="#333" stroke-width="1"/>
<path d="M541.4,139.5 C544.9,141.5 544.4,144 541.4,145 C538.4,146 537.9,148.5 541.4,150.5" fill="none" stroke="#444" stroke-width="0.9"/>
<line x1="541.4" y1="150.5" x2="541.4" y2="165" stroke="#333" stroke-width="1"/>
<circle cx="541.4" cy="139.5" r="1.3" fill="#111"/>
<circle cx="541.4" cy="150.5" r="1.3" fill="#111"/>
<path d="M538.2,161.3 L541.4,164.5 L544.6,161.3" fill="none" stroke="#333" stroke-width="0.9"/>
<text x="418.3" y="146.12" font-size="7" text-anchor="start" fill="#333">FUSE 25</text>
<text x="418.3" y="155.22" font-size="7" text-anchor="start" fill="#333">7.5A</text>
<text x="476.6" y="146.12" font-size="7" text-anchor="start" fill="#333">FUSE 31</text>
<text x="476.6" y="155.22" font-size="7" text-anchor="start" fill="#333">7.5A</text>
<text x="547.3" y="146.12" font-size="7" text-anchor="start" fill="#333">FUSE 13</text>
<text x="547.3" y="155.22" font-size="7" text-anchor="start" fill="#333">15A</text>
<text x="591.7" y="131.42" font-size="7" text-anchor="start" fill="#333">UNDER-</text>
<text x="591.7" y="139.82" font-size="7" text-anchor="start" fill="#333">DASH</text>
<text x="591.7" y="148.22" font-size="7" text-anchor="start" fill="#333">FUSE/</text>
<text x="591.7" y="156.62" font-size="7" text-anchor="start" fill="#333">RELAY</text>
<text x="591.7" y="165.02" font-size="7" text-anchor="start" fill="#333">BOX</text>
<path d="M408.4,167.6 C410,170.3 414.8,170.3 416.4,167.6" fill="#fff" stroke="#444" stroke-width="0.95"/>
<path d="M466.7,167.6 C468.3,170.3 473.1,170.3 474.7,167.6" fill="#fff" stroke="#444" stroke-width="0.95"/>
<path d="M537.4,167.6 C539,170.3 543.8,170.3 545.4,167.6" fill="#fff" stroke="#444" stroke-width="0.95"/>
<line x1="474" y1="167.2" x2="538" y2="167.2" stroke="#444" stroke-width="1.2" stroke-dasharray="4.5,2.5"/>
<text x="406.9" y="176.92" font-size="7" text-anchor="end" fill="#333">10</text>
<text x="418.1" y="174.12" font-size="7" text-anchor="start" fill="#333">C551</text>
<line x1="418.1" y1="174.7" x2="434.84" y2="174.7" stroke="#333" stroke-width="0.6"/>
<text x="464.8" y="176.92" font-size="7" text-anchor="end" fill="#333">11</text>
<text x="532.3" y="176.92" font-size="7" text-anchor="end" fill="#333">8</text>
<text x="546.6" y="174.12" font-size="7" text-anchor="start" fill="#333">C439</text>
<line x1="546.6" y1="174.7" x2="563.34" y2="174.7" stroke="#333" stroke-width="0.6"/>
<text x="457.7" y="187.12" font-size="7" text-anchor="middle" fill="#333">BLU/</text>
<text x="457.7" y="194.72" font-size="7" text-anchor="middle" fill="#333">WHT</text>
<text x="527.2" y="187.12" font-size="7" text-anchor="middle" fill="#333">YEL/</text>
<text x="527.2" y="194.72" font-size="7" text-anchor="middle" fill="#333">GRN</text>
<polyline points="541.4,168 541.4,591.3 788,591.3" fill="none" stroke="#e8f028" stroke-width="1.7000000000000002" stroke-linejoin="miter" stroke-linecap="butt"/>
<polyline points="542.3,168.9 542.3,592.2 788.9,592.2" fill="none" stroke="#b4dca0" stroke-width="0.6" stroke-linejoin="miter" stroke-linecap="butt"/>
<text x="655.7" y="107.12" font-size="7" text-anchor="middle" fill="#333">(RIGHT SIDE</text>
<text x="655.7" y="114.92" font-size="7" text-anchor="middle" fill="#333">OF FRONT</text>
<text x="655.7" y="122.82" font-size="7" text-anchor="middle" fill="#333">CONSOLE)</text>
<text x="655.7" y="131.52" font-size="7" text-anchor="middle" fill="#333">DATA LINK</text>
<text x="655.7" y="140.02" font-size="7" text-anchor="middle" fill="#333">CONNECTOR</text>
<path d="M654.3,144.2 C655.9,146.9 660.7,146.9 662.3,144.2" fill="#fff" stroke="#444" stroke-width="0.95"/>
<text x="652" y="153.12" font-size="7" text-anchor="end" fill="#333">15</text>
<text x="635.9" y="162.82" font-size="7" text-anchor="start" fill="#333">GRN/</text>
<text x="635.9" y="171.92" font-size="7" text-anchor="start" fill="#333">WHT</text>
<text x="737.7" y="121.72" font-size="7" text-anchor="middle" fill="#333">HOT AT ALL TIMES</text>
<rect x="684.9" y="124.3" width="150" height="40.9" fill="#dadafe" stroke="#333" stroke-width="1.5" stroke-dasharray="7.3,3.7"/>
<polyline points="693.3,138 693.3,129.8 787.2,129.8 787.2,138" fill="none" stroke="#333" stroke-width="1" stroke-linejoin="miter" stroke-linecap="butt"/>
<polyline points="740.3,124.3 740.3,129.8" fill="none" stroke="#333" stroke-width="1" stroke-linejoin="miter" stroke-linecap="butt"/>
<circle cx="740.3" cy="129.8" r="1.3" fill="#111"/>
<line x1="693.3" y1="129.8" x2="693.3" y2="139" stroke="#333" stroke-width="1"/>
<path d="M693.3,139 C696.8,141 696.3,144 693.3,145 C690.3,146 689.8,149 693.3,151" fill="none" stroke="#444" stroke-width="0.9"/>
<line x1="693.3" y1="151" x2="693.3" y2="165" stroke="#333" stroke-width="1"/>
<circle cx="693.3" cy="139" r="1.3" fill="#111"/>
<circle cx="693.3" cy="151" r="1.3" fill="#111"/>
<path d="M690.1,161.3 L693.3,164.5 L696.5,161.3" fill="none" stroke="#333" stroke-width="0.9"/>
<line x1="787.2" y1="129.8" x2="787.2" y2="139" stroke="#333" stroke-width="1"/>
<path d="M787.2,139 C790.7,141 790.2,144 787.2,145 C784.2,146 783.7,149 787.2,151" fill="none" stroke="#444" stroke-width="0.9"/>
<line x1="787.2" y1="151" x2="787.2" y2="165" stroke="#333" stroke-width="1"/>
<circle cx="787.2" cy="139" r="1.3" fill="#111"/>
<circle cx="787.2" cy="151" r="1.3" fill="#111"/>
<path d="M784,161.3 L787.2,164.5 L790.4,161.3" fill="none" stroke="#333" stroke-width="0.9"/>
<text x="699.8" y="146.02" font-size="7" text-anchor="start" fill="#333">FUSE 47</text>
<text x="699.8" y="154.72" font-size="7" text-anchor="start" fill="#333">7.5A</text>
<text x="793.4" y="146.02" font-size="7" text-anchor="start" fill="#333">FUSE 44</text>
<text x="793.4" y="154.72" font-size="7" text-anchor="start" fill="#333">15A</text>
<text x="838.1" y="129.52" font-size="7" text-anchor="start" fill="#333">UNDER-</text>
<text x="838.1" y="137.62" font-size="7" text-anchor="start" fill="#333">HOOD</text>
<text x="838.1" y="146.62" font-size="7" text-anchor="start" fill="#333">FUSE/</text>
<text x="838.1" y="154.72" font-size="7" text-anchor="start" fill="#333">RELAY</text>
<text x="838.1" y="164.42" font-size="7" text-anchor="start" fill="#333">BOX</text>
<path d="M689.3,167.6 C690.9,170.3 695.7,170.3 697.3,167.6" fill="#fff" stroke="#444" stroke-width="0.95"/>
<path d="M783.2,167.6 C784.8,170.3 789.6,170.3 791.2,167.6" fill="#fff" stroke="#444" stroke-width="0.95"/>
<line x1="697" y1="167.7" x2="783.5" y2="167.7" stroke="#444" stroke-width="1.2" stroke-dasharray="4.5,2.5"/>
<text x="685.6" y="176.12" font-size="7" text-anchor="end" fill="#333">8</text>
<text x="782.8" y="177.72" font-size="7" text-anchor="end" fill="#333">7</text>
<text x="794.4" y="176.12" font-size="7" text-anchor="start" fill="#333">C217</text>
<line x1="794.4" y1="176.7" x2="811.14" y2="176.7" stroke="#333" stroke-width="0.6"/>
<text x="671.9" y="187.02" font-size="7" text-anchor="start" fill="#333">WHT/</text>
<text x="671.9" y="194.92" font-size="7" text-anchor="start" fill="#333">BLU</text>
<text x="765.9" y="187.02" font-size="7" text-anchor="start" fill="#333">YEL/</text>
<text x="765.9" y="194.92" font-size="7" text-anchor="start" fill="#333">WHT</text>
<polyline points="694.2,169.5 694.2,200" fill="none" stroke="#4040ff" stroke-width="1.5" stroke-linejoin="miter" stroke-linecap="butt" stroke-dasharray="7.2,4.3"/>
<circle cx="694" cy="204.7" r="5" fill="#fff"/>
<circle cx="694" cy="204.7" r="1.8" fill="#111"/>
<polyline points="694.1,210.5 694.1,800" fill="none" stroke="#a8a8ff" stroke-width="1.4" stroke-linejoin="miter" stroke-linecap="butt"/>
<polyline points="787.2,169 787.2,403.8 705.3,403.8 705.3,545.2 788,545.2" fill="none" stroke="#f4f428" stroke-width="1.7000000000000002" stroke-linejoin="miter" stroke-linecap="butt"/>
<polyline points="788.1,169.9 788.1,404.7 706.2,404.7 706.2,546.1 788.9,546.1" fill="none" stroke="#ffffff" stroke-width="0.6" stroke-linejoin="miter" stroke-linecap="butt"/>
<text x="853.4" y="248.82" font-size="7" text-anchor="end" fill="#333">BLU</text>
<text x="867" y="255.12" font-size="7" text-anchor="middle" fill="#333">1</text>
<text x="853.4" y="260.53" font-size="7" text-anchor="end" fill="#333">LT GRN</text>
<text x="867" y="266.83" font-size="7" text-anchor="middle" fill="#333">2</text>
<text x="853.4" y="307.37" font-size="7" text-anchor="end" fill="#333">GRN/RED</text>
<text x="867" y="313.67" font-size="7" text-anchor="middle" fill="#333">3</text>
<text x="853.4" y="366.02" font-size="7" text-anchor="end" fill="#333">LT GRN</text>
<text x="867" y="372.32" font-size="7" text-anchor="middle" fill="#333">4</text>
<text x="853.4" y="377.63" font-size="7" text-anchor="end" fill="#333">GRN/BLK</text>
<text x="867" y="383.93" font-size="7" text-anchor="middle" fill="#333">5</text>
<text x="853.4" y="729.02" font-size="7" text-anchor="end" fill="#333">GRN</text>
<text x="867" y="735.32" font-size="7" text-anchor="middle" fill="#333">6</text>
<text x="853.4" y="752.35" font-size="7" text-anchor="end" fill="#333">YEL/GRN</text>
<text x="867" y="758.65" font-size="7" text-anchor="middle" fill="#333">7</text>
<text x="853.4" y="763.52" font-size="7" text-anchor="end" fill="#333">BLU/RED</text>
<text x="867" y="769.82" font-size="7" text-anchor="middle" fill="#333">8</text>
<text x="853.4" y="775.72" font-size="7" text-anchor="end" fill="#333">YEL/BLK</text>
<text x="867" y="782.02" font-size="7" text-anchor="middle" fill="#333">9</text>
<text x="853.4" y="787.52" font-size="7" text-anchor="end" fill="#333">RED</text>
<text x="867" y="793.82" font-size="7" text-anchor="middle" fill="#333">10</text>
<polyline points="798.8,800 798.8,778.7 858,778.7" fill="none" stroke="#eeee22" stroke-width="1.7000000000000002" stroke-linejoin="miter" stroke-linecap="butt"/>
<polyline points="799.7,800.9 799.7,779.6 858.9,779.6" fill="none" stroke="#c4c49c" stroke-width="0.6" stroke-linejoin="miter" stroke-linecap="butt"/>
<rect x="733.1" y="414.1" width="38.5" height="26.3" fill="#dadafe" stroke="#444" stroke-width="1"/>
<path d="M734,427.4 L742.5,427.4 M762,427.4 L771,427.4 M737,424.8 L734.2,427.4 L737,430 M768,424.8 L770.8,427.4 L768,430" fill="none" stroke="#444" stroke-width="0.9"/>
<rect x="742.5" y="423.6" width="19.5" height="7.6" fill="none" stroke="#444" stroke-width="0.9"/>
<circle cx="752.6" cy="427.4" r="7.1" fill="#dadafe" stroke="#444" stroke-width="0.9"/>
<text x="752.6" y="431.2" font-size="10" text-anchor="middle" fill="#333">M</text>
<path d="M731.2,423.3 Q727.3,427.4 731.2,431.5 M774,423.3 Q777.9,427.4 774,431.5" fill="none" stroke="#444" stroke-width="1.1"/>
<text x="724.3" y="424.94" font-size="6.5" text-anchor="middle" fill="#333">2</text>
<text x="777.2" y="424.94" font-size="6.5" text-anchor="middle" fill="#333">1</text>
<text x="783.3" y="425.12" font-size="7" text-anchor="start" fill="#333">BLK/WHT</text>
<polyline points="776.5,427.4 817.3,427.4" fill="none" stroke="#444444" stroke-width="1.1" stroke-linejoin="miter" stroke-linecap="butt"/>
<circle cx="822.3" cy="427.4" r="1.4" fill="#111"/>
<path d="M824.6,422.2 L824.6,432.6 M826.7,424 L826.7,431 M828.7,425.6 L828.7,429.4" stroke="#555" stroke-width="0.9"/>
<text x="857.5" y="430.22" font-size="7" text-anchor="end" fill="#333">G300</text>
<text x="857.5" y="438.72" font-size="7" text-anchor="end" fill="#333">(BELOW</text>
<text x="857.5" y="447.12" font-size="7" text-anchor="end" fill="#333">DRIVER'S SEAT)</text>
<text x="752.8" y="449.92" font-size="7" text-anchor="middle" fill="#333">FUEL PUMP</text>
<polyline points="728,427.4 716.8,427.4 716.8,485.8 788,485.8" fill="none" stroke="#e8f028" stroke-width="1.7000000000000002" stroke-linejoin="miter" stroke-linecap="butt"/>
<polyline points="728.9,428.3 717.7,428.3 717.7,486.7 788.9,486.7" fill="none" stroke="#b4dca0" stroke-width="0.6" stroke-linejoin="miter" stroke-linecap="butt"/>
<rect x="791.6" y="456.6" width="84.9" height="151" fill="#dadafe" stroke="#444" stroke-width="1.1"/>
<path d="M790.5,482.1 Q786.5,485.8 790.5,489.5" fill="none" stroke="#333" stroke-width="1.1"/>
<text x="776.7" y="483.62" font-size="7" text-anchor="end" fill="#333">YEL/GRN</text>
<text x="783" y="482.14" font-size="6.5" text-anchor="middle" fill="#333">4</text>
<path d="M796.6,482.4 L793,485.8 L796.6,489.2" fill="none" stroke="#333" stroke-width="0.85"/>
<path d="M790.5,505.6 Q786.5,509.3 790.5,513" fill="none" stroke="#333" stroke-width="1.1"/>
<text x="776.7" y="507.12" font-size="7" text-anchor="end" fill="#333">GRN/YEL</text>
<text x="783" y="505.64" font-size="6.5" text-anchor="middle" fill="#333">1</text>
<path d="M796.6,505.9 L793,509.3 L796.6,512.7" fill="none" stroke="#333" stroke-width="0.85"/>
<path d="M790.5,517 Q786.5,520.7 790.5,524.4" fill="none" stroke="#333" stroke-width="1.1"/>
<text x="776.7" y="518.52" font-size="7" text-anchor="end" fill="#333">BLU/WHT</text>
<text x="783" y="517.04" font-size="6.5" text-anchor="middle" fill="#333">2</text>
<path d="M796.6,517.3 L793,520.7 L796.6,524.1" fill="none" stroke="#333" stroke-width="0.85"/>
<path d="M790.5,541.5 Q786.5,545.2 790.5,548.9" fill="none" stroke="#333" stroke-width="1.1"/>
<text x="776.7" y="543.02" font-size="7" text-anchor="end" fill="#333">YEL/WHT</text>
<text x="783" y="541.54" font-size="6.5" text-anchor="middle" fill="#333">7</text>
<path d="M796.6,541.8 L793,545.2 L796.6,548.6" fill="none" stroke="#333" stroke-width="0.85"/>
<path d="M790.5,576.2 Q786.5,579.9 790.5,583.6" fill="none" stroke="#333" stroke-width="1.1"/>
<text x="776.7" y="577.72" font-size="7" text-anchor="end" fill="#333">YEL/BLK</text>
<text x="783" y="576.24" font-size="6.5" text-anchor="middle" fill="#333">6</text>
<path d="M796.6,576.5 L793,579.9 L796.6,583.3" fill="none" stroke="#333" stroke-width="0.85"/>
<path d="M790.5,587.3 Q786.5,591 790.5,594.7" fill="none" stroke="#333" stroke-width="1.1"/>
<text x="776.7" y="588.82" font-size="7" text-anchor="end" fill="#333">YEL/GRN</text>
<text x="783" y="587.34" font-size="6.5" text-anchor="middle" fill="#333">5</text>
<path d="M796.6,587.6 L793,591 L796.6,594.4" fill="none" stroke="#333" stroke-width="0.85"/>
<path d="M790.5,599.2 Q786.5,602.9 790.5,606.6" fill="none" stroke="#333" stroke-width="1.1"/>
<text x="776.7" y="600.72" font-size="7" text-anchor="end" fill="#333">BLK</text>
<text x="783" y="599.24" font-size="6.5" text-anchor="middle" fill="#333">3</text>
<path d="M796.6,599.5 L793,602.9 L796.6,606.3" fill="none" stroke="#333" stroke-width="0.85"/>
<polyline points="793.5,485.8 826.2,485.8" fill="none" stroke="#333" stroke-width="0.9" stroke-linejoin="miter" stroke-linecap="butt"/>
<circle cx="826.2" cy="485.8" r="1.2" fill="#111"/>
<circle cx="826.2" cy="462.8" r="1.2" fill="#111"/>
<polyline points="826.2,462.8 846,474.2" fill="none" stroke="#333" stroke-width="0.9" stroke-linejoin="miter" stroke-linecap="butt"/>
<circle cx="846" cy="474.2" r="1.2" fill="#111"/>
<polyline points="846,474.2 857.7,474.2 857.7,497.7 802.7,497.7 802.7,591" fill="none" stroke="#333" stroke-width="0.9" stroke-linejoin="miter" stroke-linecap="butt"/>
<circle cx="802.7" cy="591" r="1.2" fill="#111"/>
<line x1="836.4" y1="469" x2="836.4" y2="506.5" stroke="#222" stroke-width="1.2" stroke-dasharray="4,2.2"/>
<path d="M829.5,463.5 L834.2,468.2 L830.9,468.9 Z" fill="#222"/>
<polyline points="793.5,509.3 824,509.3" fill="none" stroke="#333" stroke-width="0.9" stroke-linejoin="miter" stroke-linecap="butt"/>
<polyline points="844,509.3 857.7,509.3 857.7,532.8" fill="none" stroke="#333" stroke-width="0.9" stroke-linejoin="miter" stroke-linecap="butt"/>
<path d="M824,509.3 a2.5,2.6 0 0 1 5,0 a2.5,2.6 0 0 1 5,0 a2.5,2.6 0 0 1 5,0 a2.5,2.6 0 0 1 5,0" fill="none" stroke="#333" stroke-width="0.9"/>
<polyline points="793.5,520.7 857.7,520.7" fill="none" stroke="#333" stroke-width="0.9" stroke-linejoin="miter" stroke-linecap="butt"/>
<circle cx="857.7" cy="520.7" r="1.2" fill="#111"/>
<path d="M820.5,517.5 L826.5,520.7 L820.5,523.9 Z" fill="#222"/><line x1="826.8" y1="517.3" x2="826.8" y2="524.1" stroke="#222" stroke-width="1"/>
<path d="M811.4,532.8 L813,532.8 l1.4,-2.6 l2.8,5.2 l2.8,-5.2 l2.8,5.2 l2.8,-5.2 l2.8,5.2 l2.8,-5.2 l1.4,2.6 L857.7,532.8" fill="none" stroke="#333" stroke-width="0.9"/>
<path d="M843.5,529.4 L850,532.8 L843.5,536.2 Z" fill="#222"/><line x1="850.3" y1="529.2" x2="850.3" y2="536.4" stroke="#222" stroke-width="1"/>
<polyline points="811.4,532.8 811.4,579.9" fill="none" stroke="#333" stroke-width="0.9" stroke-linejoin="miter" stroke-linecap="butt"/>
<circle cx="811.4" cy="579.9" r="1.2" fill="#111"/>
<polyline points="793.5,545.2 857.7,545.2 857.7,568 843.6,568" fill="none" stroke="#333" stroke-width="0.9" stroke-linejoin="miter" stroke-linecap="butt"/>
<circle cx="843.6" cy="568" r="1.2" fill="#111"/>
<circle cx="823.8" cy="555.8" r="1.2" fill="#111"/>
<polyline points="823.8,555.8 843.6,568" fill="none" stroke="#333" stroke-width="0.9" stroke-linejoin="miter" stroke-linecap="butt"/>
<line x1="834.4" y1="561" x2="834.4" y2="588.5" stroke="#222" stroke-width="1.2" stroke-dasharray="4,2.2"/>
<path d="M827,556.8 L831.6,561.2 L828.3,561.9 Z" fill="#222"/>
<polyline points="793.5,579.9 824.5,579.9" fill="none" stroke="#333" stroke-width="0.9" stroke-linejoin="miter" stroke-linecap="butt"/>
<circle cx="824.5" cy="579.9" r="1.2" fill="#111"/>
<polyline points="793.5,591 824,591" fill="none" stroke="#333" stroke-width="0.9" stroke-linejoin="miter" stroke-linecap="butt"/>
<polyline points="844,591 857.7,591 857.7,602.9" fill="none" stroke="#333" stroke-width="0.9" stroke-linejoin="miter" stroke-linecap="butt"/>
<path d="M824,591 a2.5,2.6 0 0 1 5,0 a2.5,2.6 0 0 1 5,0 a2.5,2.6 0 0 1 5,0 a2.5,2.6 0 0 1 5,0" fill="none" stroke="#333" stroke-width="0.9"/>
<polyline points="793.5,602.9 857.7,602.9" fill="none" stroke="#333" stroke-width="0.9" stroke-linejoin="miter" stroke-linecap="butt"/>
<path d="M826,599.7 L819.5,602.9 L826,606.1 Z" fill="#222"/><line x1="819.2" y1="599.5" x2="819.2" y2="606.3" stroke="#222" stroke-width="1"/>
<text x="876.5" y="617.02" font-size="7" text-anchor="end" fill="#333">PGM-FI MAIN RELAY</text>
<text x="876.5" y="626.22" font-size="7" text-anchor="end" fill="#333">(ABOVE LEFT KICK PANEL)</text>
<path d="M523.2,601.2 L523.2,605 M525.3,599.6 L525.3,606.4 M527.4,598 L527.4,608" stroke="#555" stroke-width="0.9"/>
<circle cx="529.8" cy="603" r="1.4" fill="#111"/>
<polyline points="534.5,603 588,603" fill="none" stroke="#444444" stroke-width="1.4" stroke-linejoin="miter" stroke-linecap="butt" stroke-dasharray="6,4.2"/>
<polyline points="591,603 788,603" fill="none" stroke="#444444" stroke-width="1.4" stroke-linejoin="miter" stroke-linecap="butt"/>
<circle cx="588.3" cy="603" r="5" fill="#fff"/>
<circle cx="588.3" cy="603" r="1.8" fill="#111"/>
<text x="540.6" y="600.72" font-size="7" text-anchor="start" fill="#333">BLK</text>
<text x="622.9" y="600.72" font-size="7" text-anchor="start" fill="#333">BLK</text>
<text x="498.5" y="608.72" font-size="7" text-anchor="start" fill="#333">G120</text>
<text x="498.5" y="617.32" font-size="7" text-anchor="start" fill="#333">(RIGHT SIDE</text>
<text x="498.5" y="625.92" font-size="7" text-anchor="start" fill="#333">OF ENGINE)</text>
</g></svg></body></html>
